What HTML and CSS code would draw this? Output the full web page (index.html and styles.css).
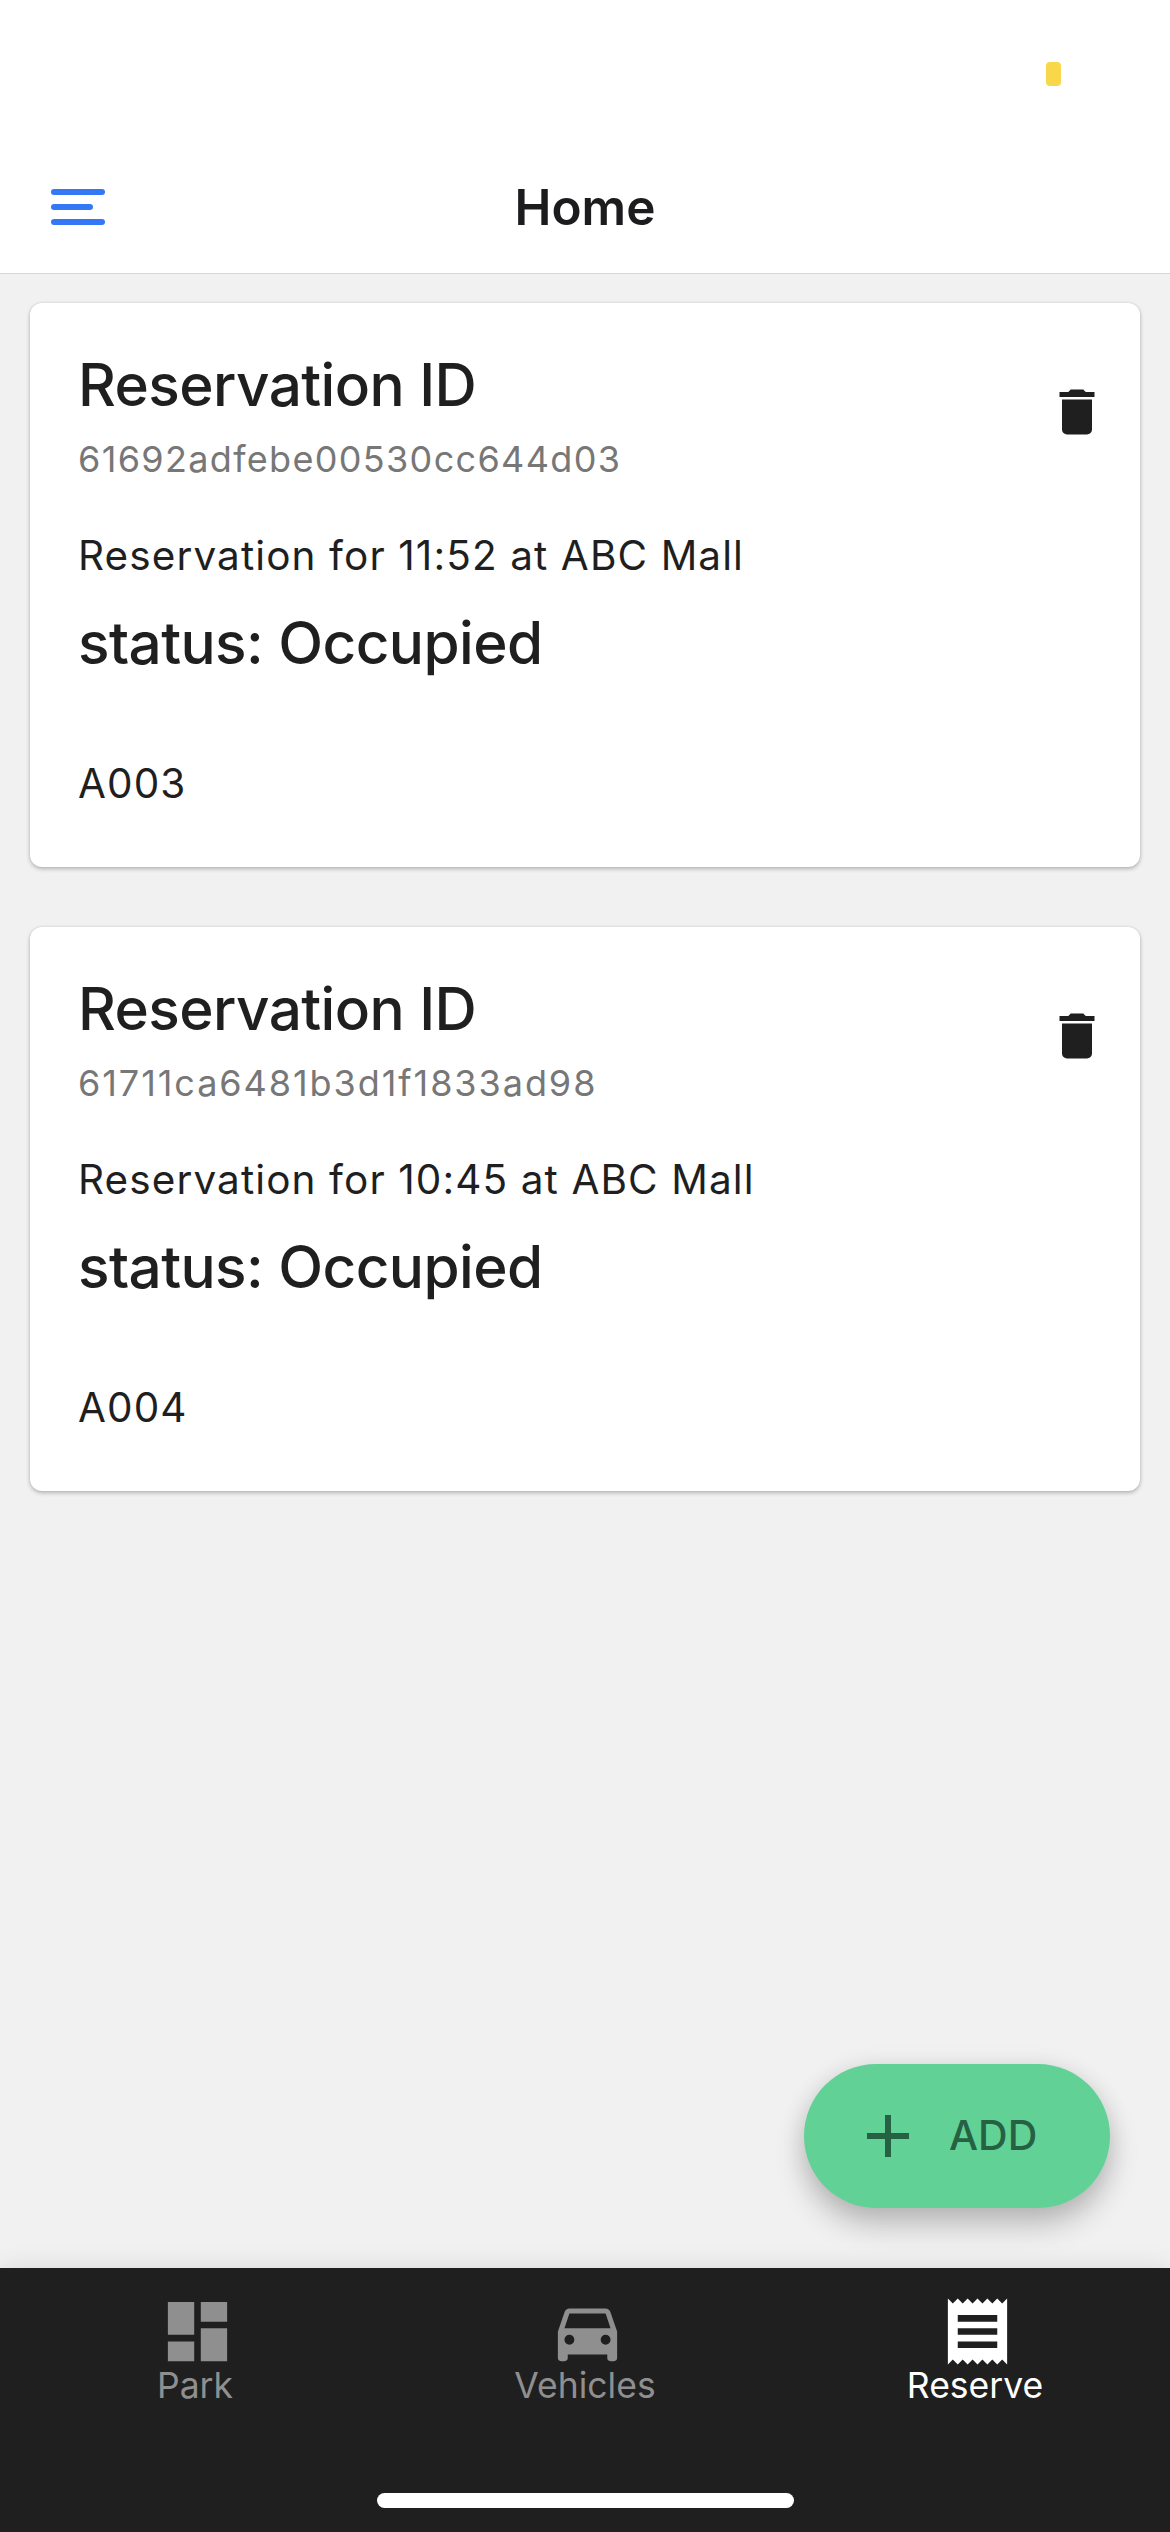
FILE: index.html
```html
<!DOCTYPE html>
<html lang="en">
<head>
<meta charset="utf-8">
<title>Home</title>
<link rel="stylesheet" href="styles.css">
</head>
<body>
<div class="app">
  <div class="status-bar"><span class="status-indicator"></span></div>
  <header class="header">
    <button class="menu" aria-label="Menu"><span class="menu-line"></span><span class="menu-line menu-line-short"></span><span class="menu-line"></span></button>
    <h1 class="header-title">Home</h1>
  </header>
  <main class="content">
    <article class="card">
      <div class="card-head">
        <div class="card-titles">
          <h2 class="title">Reservation ID</h2>
          <p class="subtitle">61692adfebe00530cc644d03</p>
        </div>
        <button class="delete" aria-label="Delete"><svg class="delete-icon" viewBox="0 0 24 24"><path d="M19 4h-3.500l-1-1h-5l-1 1H5v2h14M6 19a2 2 0 0 0 2 2h8a2 2 0 0 0 2-2V7H6z"/></svg></button>
      </div>
      <p class="text">Reservation for 11:52 at ABC Mall</p>
      <h2 class="title status">status: Occupied</h2>
      <p class="text slot">A003</p>
    </article>
    <article class="card">
      <div class="card-head">
        <div class="card-titles">
          <h2 class="title">Reservation ID</h2>
          <p class="subtitle subtitle-wide">61711ca6481b3d1f1833ad98</p>
        </div>
        <button class="delete" aria-label="Delete"><svg class="delete-icon" viewBox="0 0 24 24"><path d="M19 4h-3.500l-1-1h-5l-1 1H5v2h14M6 19a2 2 0 0 0 2 2h8a2 2 0 0 0 2-2V7H6z"/></svg></button>
      </div>
      <p class="text">Reservation for 10:45 at ABC Mall</p>
      <h2 class="title status">status: Occupied</h2>
      <p class="text slot">A004</p>
    </article>
    <button class="fab"><svg class="fab-icon" viewBox="0 0 24 24"><path d="M19 13h-6v6h-2v-6H5v-2h6V5h2v6h6z"/></svg><span class="fab-label">ADD</span></button>
  </main>
  <nav class="tabs">
    <div class="tab-row">
      <a class="tab"><svg class="tab-icon" viewBox="0 0 24 24"><path d="M13 3v6h8V3M13 21h8V11h-8M3 21h8v-6H3M3 13h8V3H3"/></svg><span class="tab-label">Park</span></a>
      <a class="tab"><svg class="tab-icon" viewBox="0 0 24 24"><path d="M5 11l1.500-4.500h11L19 11M17.500 16a1.500 1.500 0 0 1 0-3a1.500 1.500 0 0 1 0 3M6.500 16a1.500 1.500 0 0 1 0-3a1.500 1.500 0 0 1 0 3M18.920 6C18.720 5.420 18.160 5 17.500 5h-11C5.840 5 5.280 5.420 5.080 6L3 12v8a1 1 0 0 0 1 1h1a1 1 0 0 0 1-1v-1h12v1a1 1 0 0 0 1 1h1a1 1 0 0 0 1-1v-8z"/></svg><span class="tab-label">Vehicles</span></a>
      <a class="tab tab-active"><svg class="tab-icon" viewBox="0 0 24 24"><path d="M3 22l1.500-1.500L6 22l1.500-1.500L9 22l1.500-1.500L12 22l1.500-1.500L15 22l1.500-1.500L18 22l1.500-1.500L21 22V2l-1.500 1.500L18 2l-1.500 1.500L15 2l-1.500 1.500L12 2l-1.500 1.500L9 2L7.500 3.500L6 2L4.500 3.500L3 2M18 9H6V7h12M18 13H6v-2h12M18 17H6v-2h12"/></svg><span class="tab-label">Reserve</span></a>
    </div>
    <span class="home-bar"></span>
  </nav>
</div>
</body>
</html>
```
FILE: styles.css
```css
* { box-sizing: border-box; margin: 0; padding: 0; }
body { background: #f1f1f1; color: #1f1f1f; font-family: Inter, "Liberation Sans", sans-serif; }
button { border: 0; background: none; font: inherit; color: inherit; }
svg { display: block; fill: currentColor; }

.app { width: 1170px; height: 2532px; display: flex; flex-direction: column; overflow: hidden; }

.status-bar { height: 141px; flex: none; padding: 62px 109px 0 0; display: flex; justify-content: flex-end; background: #fff; }
.status-indicator { width: 15px; height: 24px; border-radius: 4px; background: #f8d84a; }

.header { height: 133px; flex: none; display: grid; grid-template-columns: 1fr auto 1fr; align-items: center; background: #fff; border-bottom: 1px solid #d8d8d8; }
.menu { margin-left: 51px; width: 54px; display: flex; flex-direction: column; gap: 9px; }
.menu-line { height: 6px; border-radius: 3px; background: #3478f6; }
.menu-line-short { width: 42px; }
.header-title { font-size: 49.5px; line-height: 60px; font-weight: 600; color: #1c1c1e; }

.content { flex: 1; padding: 29px 30px 0; display: flex; flex-direction: column; gap: 60px; }
.card { height: 564px; flex: none; padding: 47px 30px 0 48px; border-radius: 12px; background: #fff; box-shadow: 0 2px 4px rgba(0, 0, 0, .24), 0 0 3px rgba(0, 0, 0, .1); }
.card-head { display: flex; justify-content: space-between; }
.title { font-size: 58.5px; line-height: 70px; font-weight: 500; letter-spacing: -.58px; }
.subtitle { margin-top: 9px; font-size: 36px; line-height: 60px; letter-spacing: 1.33px; color: #777; }
.subtitle-wide { letter-spacing: 1.94px; }
.delete { margin: 32px 3px 0 0; height: 60px; }
.delete-icon { width: 60px; height: 60px; }
.text { margin-top: 37px; font-size: 40.5px; line-height: 60px; letter-spacing: 1.1px; }
.status { margin-top: 22px; }
.slot { margin-top: 76px; }

.fab { margin: auto 30px 60px auto; width: 306px; height: 144px; padding-left: 48px; display: flex; align-items: center; gap: 25px; border-radius: 72px; background: #61d196; color: #266144; box-shadow: 0 18px 30px rgba(0, 0, 0, .2), 0 3px 24px rgba(0, 0, 0, .1); }
.fab-icon { width: 72px; height: 72px; }
.fab-label { font-size: 41px; font-weight: 500; line-height: 60px; padding-bottom: 2px; }

.tabs { height: 264px; flex: none; display: flex; flex-direction: column; align-items: center; background: #1f1f1f; color: #8f8f8f; box-shadow: 0 0 24px rgba(0, 0, 0, .1); }
.tab-row { width: 100%; height: 225px; padding-top: 24px; display: grid; grid-template-columns: repeat(3, 1fr); }
.tab { display: flex; flex-direction: column; align-items: center; }
.tab-active { color: #fff; }
.tab-icon { width: 79px; height: 79px; margin-left: 4px; }
.tab-label { margin-top: -6px; font-size: 35.5px; line-height: 42px; }
.home-bar { width: 417px; height: 15px; border-radius: 8px; background: #fff; }
```
